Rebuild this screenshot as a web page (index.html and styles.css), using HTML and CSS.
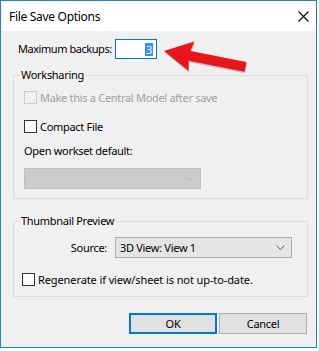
FILE: index.html
```html
<!DOCTYPE html>
<html lang="en">
<head>
    <meta charset="UTF-8">
    <title>File Save Options</title>
    <link rel="stylesheet" href="styles.css">
</head>
<body>
    <div class="window">
        <div class="title-bar">
            <span class="title">File Save Options</span>
            <svg class="close-icon" width="11" height="11" viewBox="0 0 11 11">
                <path d="M0.5 0.5 L10.5 10.5 M10.5 0.5 L0.5 10.5" stroke="#000" stroke-width="1.1" fill="none"/>
            </svg>
        </div>

        <div class="content">
            <div class="backup-row">
                <label class="backup-label">Maximum backups:</label>
                <div class="text-box"><span class="selected">3</span></div>
            </div>

            <fieldset class="group">
                <legend>Worksharing</legend>
                <label class="check-row disabled first">
                    <input type="checkbox" class="check" disabled>
                    <span>Make this a Central Model after save</span>
                </label>
                <label class="check-row compact">
                    <input type="checkbox" class="check">
                    <span>Compact File</span>
                </label>
                <div class="field-label">Open workset default:</div>
                <div class="combo disabled-combo">
                    <span></span>
                    <svg class="chevron" width="9" height="5" viewBox="0 0 9 5">
                        <path d="M0.5 0.5 L4.5 4.5 L8.5 0.5" stroke="#b4b4b4" fill="none"/>
                    </svg>
                </div>
            </fieldset>

            <fieldset class="group thumb">
                <legend>Thumbnail Preview</legend>
                <div class="source-row">
                    <span class="source-label">Source:</span>
                    <div class="combo source-combo">
                        <span>3D View: View 1</span>
                        <svg class="chevron" width="9" height="5" viewBox="0 0 9 5">
                            <path d="M0.5 0.5 L4.5 4.5 L8.5 0.5" stroke="#5a5a5a" fill="none"/>
                        </svg>
                    </div>
                </div>
                <label class="check-row regen">
                    <input type="checkbox" class="check">
                    <span>Regenerate if view/sheet is not up-to-date.</span>
                </label>
            </fieldset>

            <div class="button-row">
                <button class="btn btn-default">OK</button>
                <button class="btn">Cancel</button>
            </div>
        </div>

        <!-- annotation arrow pointing at the backups box -->
        <svg class="callout" width="319" height="100" viewBox="0 0 319 100">
            <g transform="translate(164 50) rotate(11)">
                <polygon points="1,1.5 29,-13.5 27,-3.5 84,-3.5 84,6.5 27,6.5 29,16.5" fill="rgba(0,0,0,0.18)"/>
                <polygon points="0,0 28,-15 26,-5 83,-5 83,5 26,5 28,15" fill="#e8151b"/>
            </g>
        </svg>
    </div>
</body>
</html>
```

FILE: styles.css
```css
* {
    margin: 0;
    padding: 0;
    box-sizing: border-box;
    font-family: "Noto Sans", "Open Sans", sans-serif;
}

body {
    background: #ffffff;
    color: #000000;
    font-size: 11px;
    letter-spacing: -0.3px;
}

.window {
    position: relative;
    width: 317px;
    height: 348px;
    border: 1px solid #1883d7;
    display: flex;
    flex-direction: column;
    background: #f0f0f0;
}

.title-bar {
    height: 30px;
    background: #ffffff;
    display: flex;
    align-items: center;
    justify-content: space-between;
    padding: 0 7px 0 8px;
}

.title {
    font-size: 12px;
    line-height: 16px;
    letter-spacing: -0.3px;
    padding-top: 1px;
}

.close-icon {
    display: block;
    margin-top: 1px;
}

.content {
    flex: 1;
    padding: 0 8px 0 12px;
    display: flex;
    flex-direction: column;
}

.backup-row {
    display: flex;
    align-items: center;
    margin-top: 8px;
    padding-left: 5px;
}

.backup-label {
    width: 97px;
    line-height: 16px;
    white-space: nowrap;
    letter-spacing: -0.45px;
}

.text-box {
    width: 42px;
    height: 20px;
    background: #ffffff;
    border: 1px solid #0078d7;
    display: flex;
    align-items: center;
    justify-content: flex-end;
    padding-right: 3px;
}

.selected {
    background: #3390ff;
    color: #ffffff;
    line-height: 13px;
    padding: 0 1px;
}

.group {
    border: 1px solid #dcdcdc;
    margin-top: 8px;
    padding: 0 10px 9px 10px;
    width: 295px;
}

.group legend {
    margin-left: -5px;
    padding: 0 2px;
    line-height: 16px;
}

.check-row {
    display: flex;
    align-items: center;
    height: 13px;
    line-height: 13px;
    white-space: nowrap;
}

.check-row.first {
    margin-top: 8px;
}

.check-row.compact {
    margin-top: 16px;
}

.check {
    appearance: none;
    width: 13px;
    height: 13px;
    border: 1px solid #333333;
    background: #ffffff;
    margin-right: 3px;
    flex-shrink: 0;
}

.disabled {
    color: #a0a0a0;
}

.disabled .check {
    border-color: #cccccc;
    background: #f0f0f0;
}

.field-label {
    margin-top: 10px;
    line-height: 16px;
}

.combo {
    height: 21px;
    display: flex;
    align-items: center;
    justify-content: space-between;
    padding: 0 6px 0 4px;
}

.disabled-combo {
    width: 177px;
    margin-top: 9px;
    background: #cccccc;
    border: 1px solid #bfbfbf;
}

.chevron {
    display: block;
}

.thumb {
    margin-top: 14px;
    padding-bottom: 10px;
}

.source-row {
    display: flex;
    align-items: center;
    margin-top: 8px;
}

.source-label {
    width: 83px;
    margin-right: 8px;
    text-align: right;
}

.source-combo {
    width: 177px;
    background: #e5e5e5;
    border: 1px solid #adadad;
}

.check-row.regen {
    margin-top: 15px;
    margin-left: -2px;
    letter-spacing: -0.1px;
}

.button-row {
    display: flex;
    justify-content: flex-end;
    gap: 2px;
    margin-top: 16px;
    padding-right: 1px;
}

.btn {
    width: 88px;
    height: 21px;
    background: #e1e1e1;
    border: 1px solid #adadad;
    font-size: 11px;
    letter-spacing: -0.3px;
    color: #000000;
}

.btn-default {
    border: 2px solid #0078d7;
}

.callout {
    position: absolute;
    top: 0;
    left: -1px;
    pointer-events: none;
}
```
